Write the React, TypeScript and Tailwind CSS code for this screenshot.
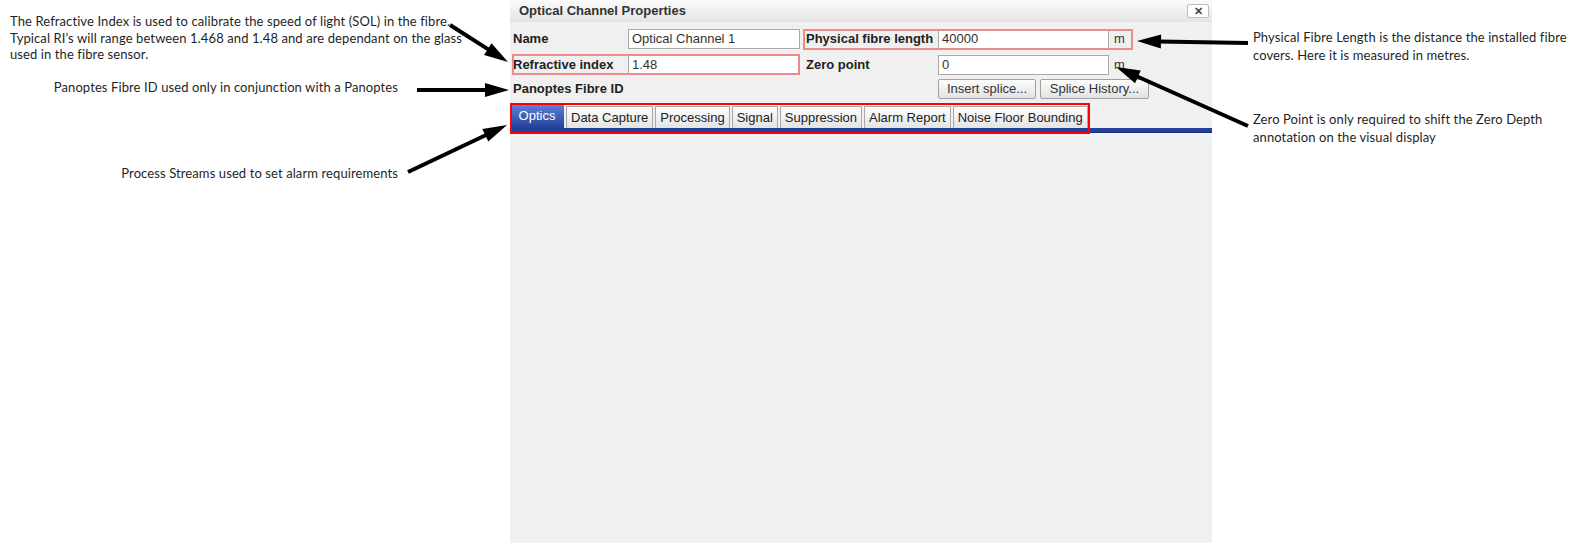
import React from "react";

const arrows = [
  { x1: 450, y1: 25, x2: 508, y2: 62 },
  { x1: 417, y1: 90, x2: 509, y2: 90 },
  { x1: 408, y1: 172, x2: 507, y2: 125 },
  { x1: 1248, y1: 43, x2: 1137, y2: 41 },
  { x1: 1248, y1: 126, x2: 1116, y2: 67 },
];

const tabs = ["Data Capture", "Processing", "Signal", "Suppression", "Alarm Report", "Noise Floor Bounding"];

function Arrow({ x1, y1, x2, y2 }: { x1: number; y1: number; x2: number; y2: number }) {
  const dx = x2 - x1;
  const dy = y2 - y1;
  const len = Math.hypot(dx, dy);
  const ux = dx / len;
  const uy = dy / len;
  const headLen = 24;
  const half = 7;
  const bx = x2 - ux * headLen;
  const by = y2 - uy * headLen;
  const pts = `${x2},${y2} ${bx - uy * half},${by + ux * half} ${bx + uy * half},${by - ux * half}`;
  return (
    <g>
      <line x1={x1} y1={y1} x2={bx + ux * 2} y2={by + uy * 2} stroke="#000" strokeWidth={4} />
      <polygon points={pts} fill="#000" />
    </g>
  );
}

function Input({ value, w }: { value: string; w: string }) {
  return (
    <div className={`${w} h-[20px] bg-white border border-[#a9a9a9] px-[3px] flex items-center text-[13px] text-[#333]`}>
      {value}
    </div>
  );
}

function Btn({ label, w }: { label: string; w: string }) {
  return (
    <div
      className={`${w} h-[20px] rounded-[2px] border border-[#a0a0a0] bg-gradient-to-b from-[#fdfdfd] to-[#e2e2e2] flex items-center justify-center text-[13px] text-[#333]`}
    >
      {label}
    </div>
  );
}

export default function App() {
  return (
    <div className="relative w-[1590px] h-[543px] bg-white flex overflow-hidden">
      {/* left notes */}
      <div className="w-[510px] shrink-0 font-['Lato',sans-serif] text-[13px] tracking-[0.1px] text-[#1f1f1f]">
        <p className="pt-[13px] pl-[10px] leading-[16.5px]">
          The Refractive Index is used to calibrate the speed of light (SOL) in the fibre.
          <br />
          Typical RI’s will range between 1.468 and 1.48 and are dependant on the glass
          <br />
          used in the fibre sensor.
        </p>
        <div className="pr-[112px] text-right leading-[16px]">
          <p className="mt-[16px]">Panoptes Fibre ID used only in conjunction with a Panoptes</p>
          <p className="mt-[70px]">Process Streams used to set alarm requirements</p>
        </div>
      </div>

      {/* dialog */}
      <div className="w-[702px] shrink-0 h-full bg-[#f0f0f0] flex flex-col font-['Liberation_Sans',Arial,sans-serif]">
        <div className="h-[22px] bg-gradient-to-b from-[#fbfbfb] to-[#e4e4e4] flex items-center justify-between pl-[9px] pr-[3px]">
          <span className="text-[13px] font-bold text-[#333]">Optical Channel Properties</span>
          <div className="w-[22px] h-[14px] bg-white border border-[#bdbdbd] rounded-[2px] flex items-center justify-center text-[11px] font-bold text-[#444] leading-none">
            ✕
          </div>
        </div>

        {/* row 1 */}
        <div className="mt-[7px] h-[20px] flex items-center text-[13px] text-[#222]">
          <div className="ml-[2px] w-[288px] flex items-center">
            <span className="w-[116px] pl-[1px] font-bold">Name</span>
            <Input value="Optical Channel 1" w="w-[172px]" />
          </div>
          <div className="ml-[3px] w-[330px] h-[21px] flex items-center outline-2 outline-[#ee8a8a] -outline-offset-2">
            <span className="w-[135px] pl-[3px] font-bold">Physical fibre length</span>
            <Input value="40000" w="w-[171px]" />
            <span className="pl-[5px] text-[#333]">m</span>
          </div>
        </div>

        {/* row 2 */}
        <div className="mt-[5px] h-[21px] flex items-center text-[13px] text-[#222]">
          <div className="ml-[2px] w-[288px] h-[21px] flex items-center outline-2 outline-[#ee8a8a] -outline-offset-2">
            <span className="w-[116px] pl-[1px] font-bold">Refractive index</span>
            <Input value="1.48" w="w-[172px] h-[21px]" />
          </div>
          <div className="ml-[3px] w-[330px] flex items-center">
            <span className="w-[135px] pl-[3px] font-bold">Zero point</span>
            <Input value="0" w="w-[171px]" />
            <span className="pl-[5px] text-[#333]">m</span>
          </div>
        </div>

        {/* row 3 */}
        <div className="mt-[4px] h-[20px] flex items-center text-[13px] text-[#222]">
          <span className="w-[428px] pl-[3px] font-bold">Panoptes Fibre ID</span>
          <Btn label="Insert splice..." w="w-[98px]" />
          <div className="w-[4px]" />
          <Btn label="Splice History..." w="w-[109px]" />
        </div>

        {/* tabs */}
        <div className="relative mt-[4px]">
          <div className="h-[25px] flex items-end pl-[2px] gap-[2px] text-[13px]">
            <div className="h-[24px] w-[54px] -ml-[2px] rounded-t-[2px] bg-gradient-to-b from-[#5f83da] to-[#24419b] text-white flex items-center justify-center">
              Optics
            </div>
            {tabs.map((t) => (
              <div
                key={t}
                className="h-[22px] px-[4px] border border-b-0 border-[#a8a8a8] bg-gradient-to-b from-white to-[#e3e3e3] text-[#222] flex items-center"
              >
                {t}
              </div>
            ))}
          </div>
          <div className="h-[5px] bg-[#25409a] border-b border-[#1a2f73]" />
          <div className="h-[4px] bg-[#eef5fb]" />
          <div className="absolute left-0 top-0 w-[580px] h-[31px] border-2 border-[#ff0000] pointer-events-none" />
        </div>
      </div>

      {/* right notes */}
      <div className="flex-1 pl-[41px] font-['Lato',sans-serif] text-[13px] tracking-[0.1px] text-[#1f1f1f] leading-[18px]">
        <p className="pt-[28px]">
          Physical Fibre Length is the distance the installed fibre
          <br />
          covers. Here it is measured in metres.
        </p>
        <p className="mt-[46px]">
          Zero Point is only required to shift the Zero Depth
          <br />
          annotation on the visual display
        </p>
      </div>

      <svg className="absolute inset-0 pointer-events-none" width={1590} height={543}>
        {arrows.map((a, i) => (
          <Arrow key={i} {...a} />
        ))}
      </svg>
    </div>
  );
}
